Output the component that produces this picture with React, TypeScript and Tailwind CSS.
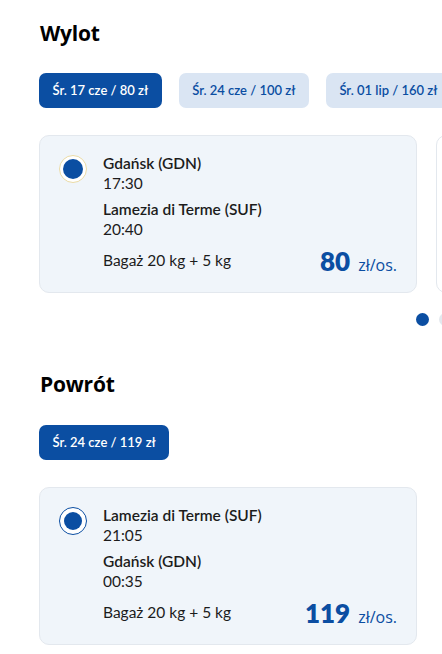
import React from "react";

type Flight = {
  from: string;
  dep: string;
  to: string;
  arr: string;
  price: string;
};

const Radio = ({ focus }: { focus?: boolean }) => (
  <div
    className={
      "flex h-[28px] w-[28px] shrink-0 items-center justify-center rounded-full border-[1.5px] bg-white " +
      (focus ? "border-[#eadba6]" : "border-[#0b4ea2]")
    }
  >
    <div className={"rounded-full bg-[#0b4ea2] " + (focus ? "h-[20px] w-[20px]" : "h-[18px] w-[18px]")} />
  </div>
);

const FlightCard = ({ f, focus }: { f: Flight; focus?: boolean }) => (
  <div className="flex w-[378px] shrink-0 gap-[16px] rounded-[10px] border border-[#e3e8ee] bg-[#f0f5fa] px-[19px] pt-[18px] pb-[18px]">
    <div className="pt-[1px]">
      <Radio focus={focus} />
    </div>
    <div className="flex flex-1 flex-col text-[15.5px] leading-[19.5px] text-[#1c1c1c]">
      <div className="font-semibold">{f.from}</div>
      <div>{f.dep}</div>
      <div className="mt-[7px] font-semibold">{f.to}</div>
      <div>{f.arr}</div>
      <div className="mt-[9px] flex h-[26px] items-center justify-between">
        <span>Bagaż 20 kg + 5 kg</span>
        <span className="flex items-baseline gap-[8px] text-[#0b4ea2]">
          <span className="text-[26px] font-extrabold leading-none">{f.price}</span>
          <span className="text-[16px] leading-none [font-family:'Open_Sans',sans-serif]">zł/os.</span>
        </span>
      </div>
    </div>
  </div>
);

const Chip = ({ label, active }: { label: string; active?: boolean }) => (
  <div
    className={
      "flex h-[35px] shrink-0 items-center rounded-[7px] px-[13.5px] text-[13px] font-semibold whitespace-nowrap " +
      (active ? "bg-[#0b4ea2] text-white" : "bg-[#dae5f3] text-[#0b4ea2]")
    }
  >
    {label}
  </div>
);

export default function App() {
  return (
    <div className="min-h-[654px] w-[442px] overflow-hidden bg-white pl-[39px] [font-family:Lato,'Open_Sans',sans-serif]">
      <h2 className="pt-[19px] pl-[1px] text-[21px] font-bold leading-[28px] tracking-[-0.2px] text-black [font-family:'Open_Sans',sans-serif]">
        Wylot
      </h2>
      <div className="mt-[26px] flex gap-[17px]">
        <Chip label="Śr. 17 cze / 80 zł" active />
        <Chip label="Śr. 24 cze / 100 zł" />
        <Chip label="Śr. 01 lip / 160 zł" />
      </div>
      <div className="mt-[27px] flex gap-[19px]">
        <FlightCard
          focus
          f={{ from: "Gdańsk (GDN)", dep: "17:30", to: "Lamezia di Terme (SUF)", arr: "20:40", price: "80" }}
        />
        <div className="w-[378px] shrink-0 rounded-[10px] border border-[#e3e8ee] bg-white" />
      </div>
      <div className="mt-[20px] flex">
        <div className="ml-auto flex translate-x-[10px] gap-[10px]">
          <div className="h-[13px] w-[13px] rounded-full bg-[#0b4ea2]" />
          <div className="h-[13px] w-[13px] rounded-full bg-[#e3e8ee]" />
        </div>
      </div>
      <h2 className="mt-[44px] pl-[1px] text-[21px] font-bold leading-[28px] tracking-[-0.2px] text-black [font-family:'Open_Sans',sans-serif]">
        Powrót
      </h2>
      <div className="mt-[27px] flex">
        <Chip label="Śr. 24 cze / 119 zł" active />
      </div>
      <div className="mt-[27px] flex">
        <FlightCard
          f={{ from: "Lamezia di Terme (SUF)", dep: "21:05", to: "Gdańsk (GDN)", arr: "00:35", price: "119" }}
        />
      </div>
    </div>
  );
}
